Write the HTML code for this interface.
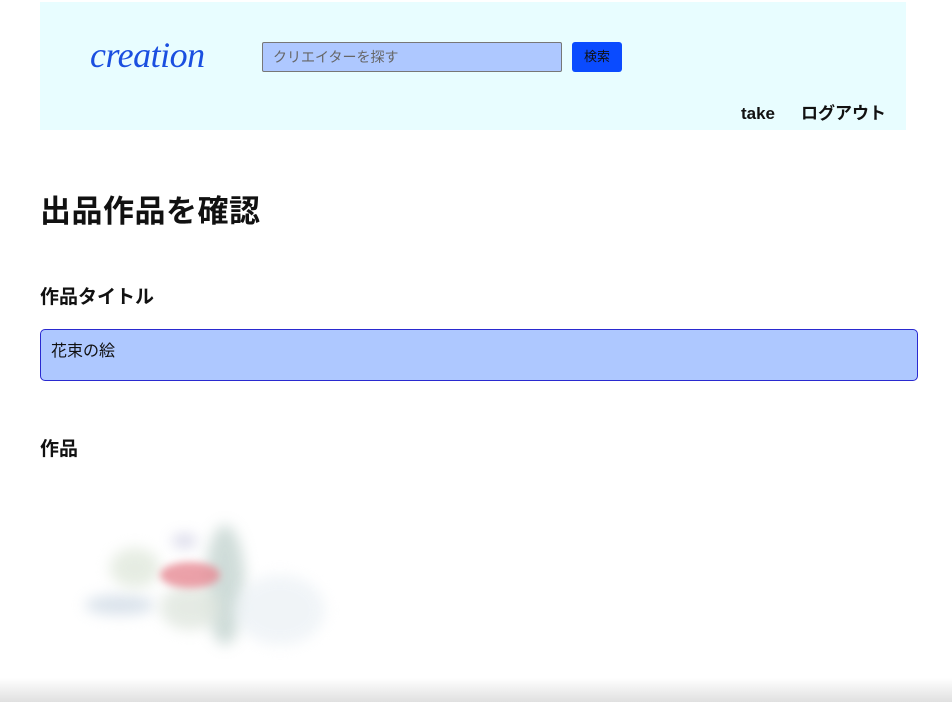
<!DOCTYPE html>
<html><head><meta charset="utf-8"><style>
body{margin:0;width:952px;height:702px;overflow:hidden;background:#fff;font-family:"Liberation Sans","Noto Sans CJK JP",sans-serif;position:relative}
.hdr{position:absolute;left:40px;top:2px;width:866px;height:128px;background:#e8fdff}
.logo{position:absolute;left:50px;top:32px;font-family:"Liberation Serif",serif;font-style:italic;font-size:36px;color:#1a4fe0;letter-spacing:-0.5px}
.search{position:absolute;left:222px;top:40px;width:288px;height:28px;background:#aec8ff;border:1px solid #777;border-radius:2px;font-size:14px;color:#666;line-height:28px;padding-left:10px}
.btn{position:absolute;left:532px;top:40px;width:50px;height:30px;background:#0a4bff;border-radius:3px;font-size:13px;line-height:30px;text-align:center;color:#111}
.nav{position:absolute;right:20px;top:97px;font-weight:bold;font-size:17px;color:#111}
.nav span{margin-left:26px}
h1{position:absolute;left:40px;top:186px;margin:0;font-size:31px;font-weight:bold;color:#111;letter-spacing:0.5px}
.h2{position:absolute;left:40px;font-size:19px;font-weight:bold;color:#111}
.box{position:absolute;left:40px;top:329px;background:#aec8ff;border:1px solid #2a2ad0;border-radius:5px;font-size:16px;line-height:44px;padding-left:10px;box-sizing:border-box;width:878px;height:52px;color:#111}
.b{position:absolute;border-radius:50%;filter:blur(7px);opacity:.8}
.foot{position:absolute;left:0;bottom:0;width:952px;height:24px;background:linear-gradient(#fff,#e0e0e0)}
</style></head><body>
<div class="hdr">
<div class="logo">creation</div>
<div class="search">クリエイターを探す</div>
<div class="btn">検索</div>
<div class="nav">take<span>ログアウト</span></div>
</div>
<h1>出品作品を確認</h1>
<div class="h2" style="top:282px">作品タイトル</div>
<div class="box">花束の絵</div>
<div class="h2" style="top:434px">作品</div>
<div class="b" style="left:85px;top:595px;width:70px;height:20px;background:#d0dbe6"></div>
<div class="b" style="left:110px;top:548px;width:50px;height:40px;background:#e0e8dc"></div>
<div class="b" style="left:205px;top:525px;width:40px;height:120px;background:#c4d4d0"></div>
<div class="b" style="left:160px;top:585px;width:60px;height:45px;background:#dfe6de"></div>
<div class="b" style="left:235px;top:575px;width:90px;height:70px;background:#edf2f6"></div>
<div class="b" style="left:172px;top:535px;width:25px;height:12px;background:#c8c8e0"></div>
<div class="b" style="left:160px;top:562px;width:60px;height:26px;background:#e78a94;filter:blur(4px)"></div>
<div class="foot"></div>
</body></html>
